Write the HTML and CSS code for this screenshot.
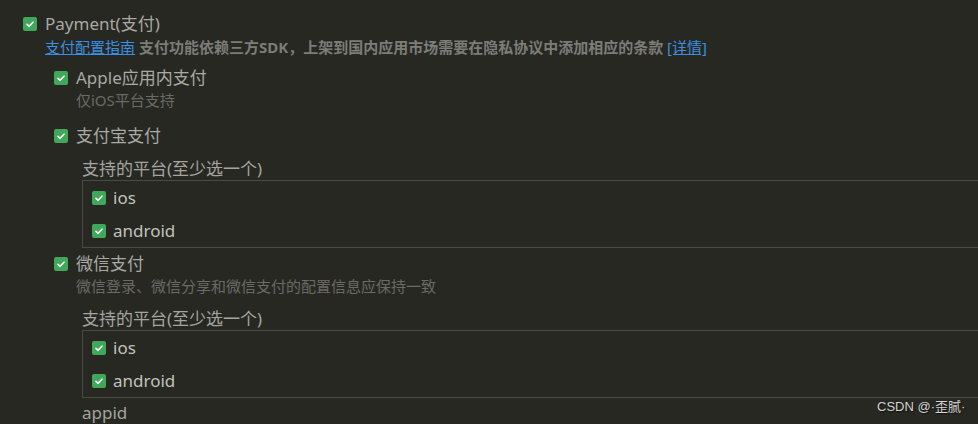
FILE: index.html
```html
<!DOCTYPE html>
<html lang="zh-CN">
<head>
    <meta charset="UTF-8">
    <title>Payment</title>
    <link rel="stylesheet" href="styles.css">
</head>
<body>
    <div class="page">
        <div class="option top">
            <span class="check"><svg viewBox="0 0 14 14"><path d="M4 7.3 6.1 9.3 10 5.2"/></svg></span>
            <span class="label">Payment(支付)</span>
        </div>
        <div class="notice">
            <a href="#">支付配置指南</a> <b>支付功能依赖三方SDK，上架到国内应用市场需要在隐私协议中添加相应的条款</b> <a href="#">[详情]</a>
        </div>

        <div class="children">
            <div class="item first">
                <div class="option">
                    <span class="check"><svg viewBox="0 0 14 14"><path d="M4 7.3 6.1 9.3 10 5.2"/></svg></span>
                    <span class="label">Apple应用内支付</span>
                </div>
                <p class="desc">仅iOS平台支持</p>
            </div>

            <div class="item alipay">
                <div class="option">
                    <span class="check"><svg viewBox="0 0 14 14"><path d="M4 7.3 6.1 9.3 10 5.2"/></svg></span>
                    <span class="label">支付宝支付</span>
                </div>
                <div class="platforms">
                    <div class="platforms-title">支持的平台(至少选一个)</div>
                    <div class="platform-box">
                        <div class="option small">
                            <span class="check"><svg viewBox="0 0 14 14"><path d="M4 7.3 6.1 9.3 10 5.2"/></svg></span>
                            <span class="label">ios</span>
                        </div>
                        <div class="option small">
                            <span class="check"><svg viewBox="0 0 14 14"><path d="M4 7.3 6.1 9.3 10 5.2"/></svg></span>
                            <span class="label">android</span>
                        </div>
                    </div>
                </div>
            </div>

            <div class="item wechat">
                <div class="option">
                    <span class="check"><svg viewBox="0 0 14 14"><path d="M4 7.3 6.1 9.3 10 5.2"/></svg></span>
                    <span class="label">微信支付</span>
                </div>
                <p class="desc">微信登录、微信分享和微信支付的配置信息应保持一致</p>
                <div class="platforms">
                    <div class="platforms-title">支持的平台(至少选一个)</div>
                    <div class="platform-box">
                        <div class="option small">
                            <span class="check"><svg viewBox="0 0 14 14"><path d="M4 7.3 6.1 9.3 10 5.2"/></svg></span>
                            <span class="label">ios</span>
                        </div>
                        <div class="option small">
                            <span class="check"><svg viewBox="0 0 14 14"><path d="M4 7.3 6.1 9.3 10 5.2"/></svg></span>
                            <span class="label">android</span>
                        </div>
                    </div>
                    <div class="field-name">appid</div>
                </div>
            </div>
        </div>
    </div>

    <div class="watermark">CSDN @·歪腻·</div>
</body>
</html>
```

FILE: styles.css
```css
* {
    margin: 0;
    padding: 0;
    box-sizing: border-box;
}

body {
    background-color: #272822;
    color: #a9a9a6;
    font-family: "Noto Sans", "Noto Sans CJK SC", sans-serif;
    font-size: 17px;
    overflow: hidden;
    height: 424px;
    position: relative;
}

.page {
    padding: 13px 0 0 23px;
}

.option {
    display: flex;
    align-items: center;
    height: 22px;
    line-height: 22px;
}

.check {
    width: 14px;
    height: 14px;
    flex: none;
    margin-right: 8px;
}

.check svg {
    display: block;
    width: 14px;
    height: 14px;
    background: #3fa85a;
    border-radius: 2px;
}

.check svg path {
    fill: none;
    stroke: #ffffff;
    stroke-width: 1.6;
    stroke-linecap: round;
    stroke-linejoin: round;
}

.label {
    white-space: nowrap;
}

.notice {
    margin-left: 22px;
    margin-top: 1px;
    font-size: 15px;
    line-height: 22px;
    white-space: nowrap;
}

.notice a {
    color: #3a8fe2;
    text-decoration: underline;
}

.notice b {
    color: #7c7c79;
}

.children {
    margin-left: 31px;
}

.item.first {
    margin-top: 9px;
}

.desc {
    margin-left: 22px;
    font-size: 15px;
    line-height: 22px;
    color: #6a6a67;
    white-space: nowrap;
}

.item.alipay {
    margin-top: 14px;
}

.item.wechat {
    margin-top: 5px;
}

.platforms {
    margin-left: 28px;
    margin-top: 11px;
}

.platforms-title {
    line-height: 22px;
    color: #a4a4a1;
}

/* the box runs on past the right edge of the panel */
.platform-box {
    border: 1px solid #4a4a46;
    border-right: none;
    padding-left: 9px;
}

.option.small {
    height: 33px;
    color: #c2c2bf;
}

.option.small .check {
    margin-right: 7px;
}

.field-name {
    margin-top: 4px;
    line-height: 22px;
    color: #a4a4a1;
}

.watermark {
    position: absolute;
    left: 877px;
    top: 398px;
    font-family: "Liberation Sans", "Noto Sans CJK SC", sans-serif;
    font-size: 13px;
    line-height: 18px;
    color: #d4d4d2;
    text-shadow: 1px 1px 1px #111;
}
```
